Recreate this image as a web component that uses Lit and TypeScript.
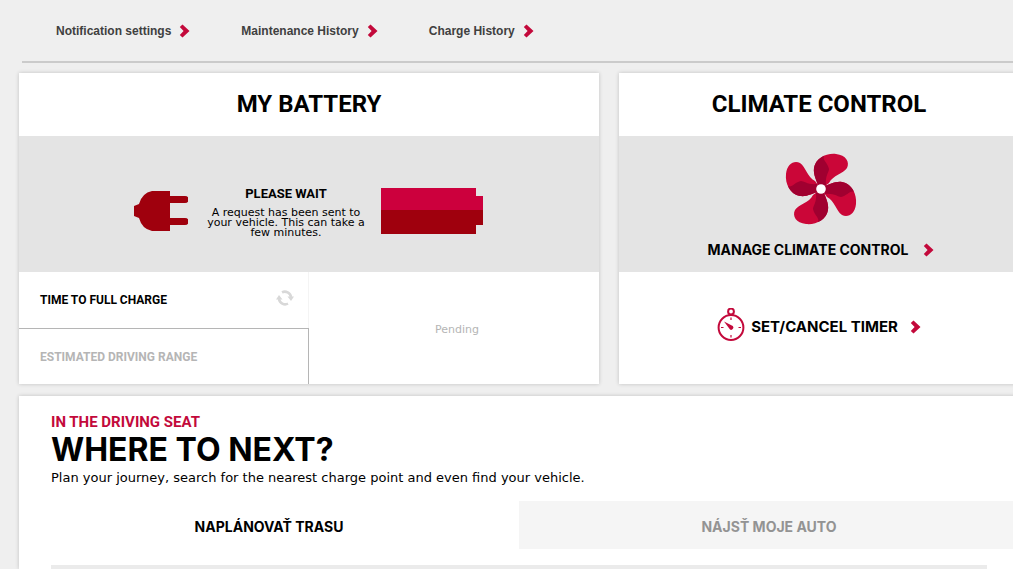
import { LitElement, html, svg, css } from "lit";
import { customElement } from "lit/decorators.js";

const chevron = html`<svg class="chevron" viewBox="0 0 11 14" aria-hidden="true">
  <path d="M3.5 0.5 10.5 7 3.5 13.5 0.8 11 4.6 7 0.8 3Z" fill="#c3093b" />
</svg>`;

const blade = (angle: number) => svg`<g transform="rotate(${angle})">
  <path d="M-3 -3C-4 -8 -8 -14 -7 -21C-5 -31 5 -36 15 -35C25 -34 29 -27 26 -21C22 -15 12 -14 8 -6L0 0Z" fill="#cb0638" />
  <path d="M-3 -3C-4 -8 -8 -14 -7 -21C-6 -27 -2 -31 3 -33C1 -29 7 -26 8 -20C8 -17 4 -13 5 -4L0 0Z" fill="#a00030" />
</g>`;

@customElement("app-root")
export class AppRoot extends LitElement {
  static styles = css`
    :host {
      display: block;
      min-height: 100vh;
      overflow: hidden;
      background: #efefef;
      color: #000;
      font-family: Roboto, "Liberation Sans", sans-serif;
    }
    * { box-sizing: border-box; }
    h1, h2, h3, p { margin: 0; }
    a { color: inherit; text-decoration: none; }
    button { font: inherit; color: inherit; background: none; border: 0; padding: 0; cursor: pointer; }
    svg { display: block; }
    .chevron { width: 11px; height: 14px; flex: none; }
    nav {
      display: flex;
      align-items: center;
      gap: 51px;
      height: 63px;
      margin-left: 22px;
      padding-left: 34px;
      border-bottom: 2px solid #cbcbcb;
      color: #404040;
      font: bold 12px/16px "Liberation Sans", Arial, sans-serif;
    }
    .link { display: flex; align-items: center; gap: 8px; }
    main {
      display: grid;
      grid-template-columns: 29fr 20fr;
      gap: 12px 20px;
      margin: 10px -6px 0 19px;
    }
    .card { background: #fff; box-shadow: 0 0 4px rgba(0, 0, 0, 0.2); }
    .title { font-size: 24px; line-height: 63px; text-align: center; font-weight: 700; }
    .status {
      display: flex;
      align-items: center;
      justify-content: center;
      gap: 12px;
      height: 136px;
      padding: 14px 2px 0 0;
      background: #e4e4e4;
    }
    .wait {
      width: 169px;
      padding: 2px 0 0 4px;
      text-align: center;
      font: 11px/10px "DejaVu Sans", Verdana, sans-serif;
    }
    .wait h3 { font: bold 13px/16px Roboto, sans-serif; margin-bottom: 6px; }
    .details { display: grid; grid-template-columns: 1fr 1fr; height: 112px; }
    .rows { display: grid; grid-template-rows: 1fr 1fr; }
    .row {
      display: flex;
      align-items: center;
      justify-content: space-between;
      padding: 0 14px 0 21px;
      font: bold 12px/16px Roboto, sans-serif;
      border-right: 1px solid #f4f4f4;
    }
    .muted { color: #b5b5b5; border-top: 1px solid #b5b5b5; border-right-color: #b5b5b5; }
    .pending {
      display: grid;
      place-items: center;
      padding: 4px 0 0 6px;
      color: #b5b5b5;
      font: 11px/12px "DejaVu Sans", Verdana, sans-serif;
    }
    .fan {
      display: flex;
      flex-direction: column;
      align-items: center;
      gap: 15px;
      height: 136px;
      padding: 17px 0 0 3px;
      background: #e4e4e4;
    }
    .action { display: flex; align-items: center; gap: 14px; font: bold 14px/20px Inter, sans-serif; }
    .timer { display: flex; align-items: center; justify-content: center; height: 112px; padding-bottom: 2px; }
    .timer .action { gap: 6px; font-size: 15px; }
    .timer .chevron { margin-left: 6px; }
    .journey { grid-column: 1 / -1; padding-top: 17px; }
    .intro { padding: 0 32px; }
    .eyebrow { color: #c3093b; font: bold 15px/18px Roboto, sans-serif; }
    .intro h1 { font: bold 32px/37px Inter, sans-serif; }
    .intro p { font: 13px/19px "DejaVu Sans", Verdana, sans-serif; }
    .tabs { display: grid; grid-template-columns: 1fr 1fr; margin-top: 14px; }
    .tab { height: 48px; padding-top: 3px; font: bold 14px/20px Inter, sans-serif; text-align: center; }
    .off { background: #f5f5f5; color: #939393; }
    .map { min-height: 4px; margin: 16px 32px 0; background: #ebebeb; }
  `;

  render() {
    return html`
      <nav>
        ${["Notification settings", "Maintenance History", "Charge History"].map(
          (label) => html`<a class="link" href="#">${label}${chevron}</a>`
        )}
      </nav>
      <main>
        <section class="card">
          <h2 class="title">MY BATTERY</h2>
          <div class="status">
            <svg width="54" height="40" viewBox="0 0 54 40" aria-hidden="true">
              <path d="M18 0H36V5H51A3 3 0 0 1 51 12H36V27H51A3 3 0 0 1 51 34H36V40H18Q8 38 5 27L0 25V15L5 13Q8 2 18 0Z" fill="#9f000d" />
            </svg>
            <div class="wait">
              <h3>PLEASE WAIT</h3>
              <p>A request has been sent to your vehicle. This can take a few minutes.</p>
            </div>
            <svg width="102" height="46" viewBox="0 0 102 46" aria-hidden="true">
              <path d="M0 0H95V8H102V23H0Z" fill="#cc003d" />
              <path d="M0 22H102V37H95V46H0Z" fill="#9f000d" />
            </svg>
          </div>
          <div class="details">
            <div class="rows">
              <div class="row">
                TIME TO FULL CHARGE
                <button aria-label="Refresh">
                  <svg width="18" height="22" viewBox="0 0 18 22">
                    <path d="M6 3.3A6.3 6.3 0 0 1 15 8M12 14.7A6.3 6.3 0 0 1 3 10" fill="none" stroke="#d8d8d8" stroke-width="2.6" />
                    <path d="M11.5 7.5H18L15 12ZM0 10.5H6.5L3 6Z" fill="#d8d8d8" />
                  </svg>
                </button>
              </div>
              <div class="row muted">ESTIMATED DRIVING RANGE</div>
            </div>
            <div class="pending">Pending</div>
          </div>
        </section>
        <section class="card">
          <h2 class="title">CLIMATE CONTROL</h2>
          <div class="fan">
            <svg width="72" height="72" viewBox="-36 -36 72 72" aria-hidden="true">
              ${[0, 90, 180, 270].map(blade)}
              <circle r="4.8" fill="#fff" />
            </svg>
            <a class="action" href="#">MANAGE CLIMATE CONTROL ${chevron}</a>
          </div>
          <div class="timer">
            <a class="action" href="#">
              <svg width="28" height="38" viewBox="0 0 28 38" aria-hidden="true">
                <g fill="none" stroke="#c3093b" stroke-width="2">
                  <circle cx="14" cy="19.5" r="12.4" />
                  <circle cx="14" cy="3.5" r="2.9" />
                  <path d="M14 9.5V12M14 27V29.5M4 19.5H6.5M21.5 19.5H24" stroke-width="1.2" />
                </g>
                <path d="M7 13.5 15.8 18.1A2.2 2.2 0 0 1 12.8 21.3Z" fill="#c3093b" />
              </svg>
              SET/CANCEL TIMER ${chevron}
            </a>
          </div>
        </section>
        <section class="card journey">
          <div class="intro">
            <div class="eyebrow">IN THE DRIVING SEAT</div>
            <h1>WHERE TO NEXT?</h1>
            <p>Plan your journey, search for the nearest charge point and even find your vehicle.</p>
          </div>
          <div class="tabs">
            <button class="tab">NAPLÁNOVAŤ TRASU</button>
            <button class="tab off">NÁJSŤ MOJE AUTO</button>
          </div>
          <div class="map"></div>
        </section>
      </main>
    `;
  }
}
